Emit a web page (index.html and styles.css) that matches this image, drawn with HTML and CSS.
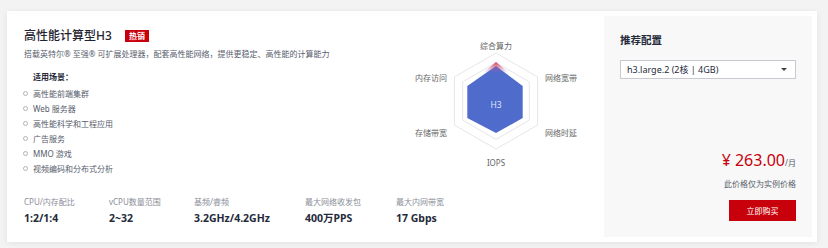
FILE: index.html
```html
<!DOCTYPE html>
<html lang="zh-CN">
<head>
    <meta charset="UTF-8">
    <title>高性能计算型H3</title>
    <link rel="stylesheet" href="styles.css">
</head>
<body>
    <div class="card">
        <div class="main">
            <div class="top">
                <div class="info">
                    <h1 class="title">高性能计算型H3 <span class="badge">热销</span></h1>
                    <p class="desc">搭载英特尔® 至强® 可扩展处理器，配套高性能网络，提供更稳定、高性能的计算能力</p>
                    <h2 class="scene-title">适用场景：</h2>
                    <ul class="scenes">
                        <li>高性能前端集群</li>
                        <li>Web 服务器</li>
                        <li>高性能科学和工程应用</li>
                        <li>广告服务</li>
                        <li>MMO 游戏</li>
                        <li>视频编码和分布式分析</li>
                    </ul>
                </div>
                <svg class="radar" width="180" height="140" viewBox="0 0 180 140">
                    <defs>
                        <linearGradient id="redTip" x1="0" y1="0" x2="0" y2="1">
                            <stop offset="0" stop-color="#e0404a"/>
                            <stop offset="1" stop-color="#a466b8" stop-opacity="0"/>
                        </linearGradient>
                    </defs>
                    <!-- grid -->
                    <polygon points="90,25 131.6,49 131.6,97 90,121 48.4,97 48.4,49" fill="none" stroke="#e6e6e6" stroke-width="1"/>
                    <polygon points="90,34.6 123.3,53.8 123.3,92.2 90,111.4 56.7,92.2 56.7,53.8" fill="none" stroke="#e6e6e6" stroke-width="1"/>
                    <!-- series -->
                    <polygon points="90,38 116.7,58 116.7,90 90,105 61.3,90 61.3,58" fill="#4f6bcb"/>
                    <polygon points="90,34 103,45 77,45" fill="url(#redTip)"/>
                    <text x="90" y="76" class="r-center">H3</text>
                    <text x="90" y="17" class="r-label" text-anchor="middle">综合算力</text>
                    <text x="139" y="49" class="r-label">网络宽带</text>
                    <text x="139" y="104" class="r-label">网络时延</text>
                    <text x="90" y="134" class="r-label" text-anchor="middle">IOPS</text>
                    <text x="41" y="104" class="r-label" text-anchor="end">存储带宽</text>
                    <text x="41" y="49" class="r-label" text-anchor="end">内存访问</text>
                </svg>
            </div>
            <div class="specs">
                <div class="spec"><span class="spec-label">CPU/内存配比</span><span class="spec-value">1:2/1:4</span></div>
                <div class="spec"><span class="spec-label">vCPU数量范围</span><span class="spec-value">2~32</span></div>
                <div class="spec"><span class="spec-label">基频/睿频</span><span class="spec-value">3.2GHz/4.2GHz</span></div>
                <div class="spec"><span class="spec-label">最大网络收发包</span><span class="spec-value">400万PPS</span></div>
                <div class="spec"><span class="spec-label">最大内网带宽</span><span class="spec-value">17 Gbps</span></div>
            </div>
        </div>
        <div class="side">
            <h2 class="side-title">推荐配置</h2>
            <div class="select">h3.large.2 (2核 | 4GB)</div>
            <div class="price"><span class="amount">¥ 263.00</span><span class="unit">/月</span></div>
            <p class="note">此价格仅为实例价格</p>
            <button class="buy">立即购买</button>
        </div>
    </div>
</body>
</html>
```

FILE: styles.css
```css
body {
    margin: 0;
    padding: 11px 11px 6px 7px;
    background: #f3f3f3;
    font-family: "Noto Sans", "Noto Sans CJK SC", sans-serif;
    color: #252b3a;
}

.card {
    display: flex;
    width: 810px;
    height: 231px;
    box-sizing: border-box;
    padding: 5px 5px 5px 0;
    background: #fff;
    box-shadow: 0 1px 6px rgba(0, 0, 0, 0.08);
}

.main {
    flex: 1;
    padding: 12px 18px 0 17px;
    display: flex;
    flex-direction: column;
}

.top {
    display: flex;
    justify-content: space-between;
}

.title {
    margin: 0;
    font-size: 12px;
    line-height: 16px;
    font-weight: 500;
    color: #1f2430;
}

.badge {
    display: inline-block;
    margin-left: 10px;
    padding: 0 4px;
    height: 12px;
    line-height: 12px;
    font-size: 8px;
    font-weight: bold;
    color: #fff;
    background: #c7000b;
    vertical-align: 1px;
}

.desc {
    margin: 4px 0 0;
    font-size: 8px;
    line-height: 12px;
    color: #575d6c;
}

.scene-title {
    margin: 11px 0 0 9px;
    font-size: 8px;
    line-height: 12px;
    font-weight: bold;
    color: #252b3a;
}

.scenes {
    list-style: none;
    margin: 3px 0 0;
    padding: 0;
}

.scenes li {
    font-size: 8px;
    line-height: 15px;
    color: #575d6c;
}

.scenes li::before {
    content: "";
    display: inline-block;
    width: 3px;
    height: 3px;
    margin: 0 5px 0 -1px;
    border: 1px solid #b0b3ba;
    border-radius: 50%;
    vertical-align: 1px;
}

.r-label {
    font-size: 8px;
    fill: #666;
    dominant-baseline: central;
}

.r-center {
    font-size: 8.5px;
    fill: #dde3ff;
    text-anchor: middle;
    dominant-baseline: central;
}

.specs {
    display: grid;
    grid-template-columns: 85px 85px 111px 91px auto;
    margin-top: 20px;
}

.spec {
    display: flex;
    flex-direction: column;
}

.spec-label {
    font-size: 8px;
    line-height: 12px;
    color: #8a8e99;
}

.spec-value {
    margin-top: 3px;
    font-size: 10.5px;
    line-height: 14px;
    font-weight: bold;
    color: #252b3a;
}

.side {
    width: 208px;
    box-sizing: border-box;
    padding: 18px 16px 16px;
    background: #f8f8f8;
    display: flex;
    flex-direction: column;
}

.side-title {
    margin: 0;
    font-size: 10.5px;
    line-height: 13px;
    font-weight: bold;
    color: #252b3a;
}

.select {
    position: relative;
    margin-top: 13px;
    height: 19px;
    box-sizing: border-box;
    padding-left: 6px;
    border: 1px solid #c8cad0;
    background: #fff;
    font-size: 9px;
    line-height: 17px;
    color: #252b3a;
}

.select::after {
    content: "";
    position: absolute;
    right: 8px;
    top: 7px;
    border-left: 3px solid transparent;
    border-right: 3px solid transparent;
    border-top: 3px solid #444;
}

.price {
    margin-top: auto;
    text-align: right;
    line-height: 20px;
}

.amount {
    font-size: 16px;
    color: #c7000b;
}

.unit {
    font-size: 8px;
    color: #575d6c;
}

.note {
    margin: 5px 0 0;
    text-align: right;
    font-size: 8px;
    line-height: 11px;
    color: #575d6c;
}

.buy {
    align-self: flex-end;
    margin-top: 11px;
    width: 67px;
    height: 21px;
    padding: 0;
    border: none;
    background: #c7000b;
    color: #fff;
    font-family: inherit;
    font-size: 8px;
    cursor: pointer;
}
```
